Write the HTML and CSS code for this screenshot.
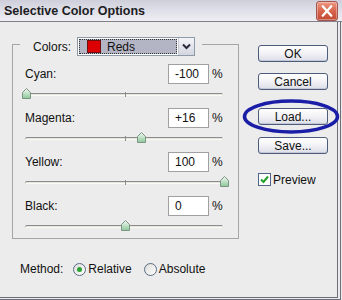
FILE: index.html
```html
<!DOCTYPE html>
<html>
<head>
<meta charset="utf-8">
<link rel="stylesheet" href="styles.css">
</head>
<body>
<div class="window">
  <div class="titlebar">
    <span class="title">Selective Color Options</span>
    <span class="close"><svg width="21" height="20" viewBox="0 0 21 20"><path d="M6 5 L15 15 M15 5 L6 15" stroke="#fff" stroke-width="2.4" stroke-linecap="round"/></svg></span>
  </div>
  <div class="frame">
    <div class="frame-inner">
      <div class="content">
        <div class="main">
          <div class="group">
            <div class="group-head">
              <div class="edge edge-left"></div>
              <div class="legend">
                <span class="legend-label">Colors:</span>
                <div class="select">
                  <div class="select-value"><span class="swatch"></span><span>Reds</span></div>
                  <div class="select-btn"><svg width="9" height="7" viewBox="0 0 9 7"><path d="M1 1.5 L4.5 5 L8 1.5" fill="none" stroke="#2a2a3a" stroke-width="2"/></svg></div>
                </div>
              </div>
              <div class="edge edge-right"></div>
            </div>
            <div class="group-body">
              <div class="channel">
                <div class="row"><span class="label">Cyan:</span><span class="num">-100</span><span class="pct">%</span></div>
                <div class="slider"><div class="track"></div><div class="tick"></div><svg class="thumb" style="left:-3px" width="9" height="11" viewBox="0 0 9 11"><defs><linearGradient id="tg1" x1="0" y1="0" x2="0" y2="1"><stop offset="0" stop-color="#f4f8f4"/><stop offset="1" stop-color="#8cc89a"/></linearGradient></defs><path d="M0.5 10.5 V4.5 L4.5 0.5 L8.5 4.5 V10.5 Z" fill="url(#tg1)" stroke="#7c9484"/></svg></div>
              </div>
              <div class="channel">
                <div class="row"><span class="label">Magenta:</span><span class="num">+16</span><span class="pct">%</span></div>
                <div class="slider"><div class="track"></div><div class="tick"></div><svg class="thumb" style="left:112px" width="9" height="11" viewBox="0 0 9 11"><path d="M0.5 10.5 V4.5 L4.5 0.5 L8.5 4.5 V10.5 Z" fill="url(#tg1)" stroke="#7c9484"/></svg></div>
              </div>
              <div class="channel">
                <div class="row"><span class="label">Yellow:</span><span class="num">100</span><span class="pct">%</span></div>
                <div class="slider"><div class="track"></div><div class="tick"></div><svg class="thumb" style="left:195px" width="9" height="11" viewBox="0 0 9 11"><path d="M0.5 10.5 V4.5 L4.5 0.5 L8.5 4.5 V10.5 Z" fill="url(#tg1)" stroke="#7c9484"/></svg></div>
              </div>
              <div class="channel">
                <div class="row"><span class="label">Black:</span><span class="num">0</span><span class="pct">%</span></div>
                <div class="slider"><div class="track"></div><div class="tick"></div><svg class="thumb" style="left:96px" width="9" height="11" viewBox="0 0 9 11"><path d="M0.5 10.5 V4.5 L4.5 0.5 L8.5 4.5 V10.5 Z" fill="url(#tg1)" stroke="#7c9484"/></svg></div>
              </div>
            </div>
          </div>
          <div class="method">
            <span class="method-label">Method:</span>
            <span class="radio checked"></span><span class="radio-text">Relative</span>
            <span class="radio second"></span><span class="radio-text">Absolute</span>
          </div>
        </div>
        <div class="side">
          <div class="btn">OK</div>
          <div class="btn btn-cancel">Cancel</div>
          <div class="btn btn-load">Load...</div>
          <div class="btn btn-save">Save...</div>
          <div class="check-row">
            <span class="checkbox"><svg width="11" height="11" viewBox="0 0 11 11"><path d="M2 5.5 L4.5 8 L9 2.5" fill="none" stroke="#22a02a" stroke-width="2"/></svg></span>
            <span>Preview</span>
          </div>
        </div>
      </div>
    </div>
  </div>
  <svg class="ellipse" width="100" height="38" viewBox="0 0 100 38"><ellipse cx="49" cy="17.5" rx="46.5" ry="15.5" fill="none" stroke="#1a1ea6" stroke-width="3.5"/></svg>
</div>
</body>
</html>
```

FILE: styles.css
```css
* { box-sizing: border-box; }
html, body { margin: 0; padding: 0; }
body {
  width: 342px;
  height: 300px;
  background: #ececec;
  font-family: "Liberation Sans", Arial, sans-serif;
  font-size: 12px;
  color: #111;
  overflow: hidden;
}
.window {
  position: relative;
  width: 342px;
  height: 300px;
  display: flex;
  flex-direction: column;
  background: #ececec;
}
.titlebar {
  height: 22px;
  flex: none;
  display: flex;
  align-items: center;
  justify-content: space-between;
  padding: 0 4px 0 4px;
  background: linear-gradient(180deg, #cfcfdb 0%, #dedee8 45%, #eeeef3 100%);
  border-bottom: 1px solid #80808e;
}
.title {
  font-weight: bold;
  font-size: 12.5px;
  color: #1c1c22;
  padding-top: 1px;
}
.close {
  width: 22px;
  height: 20px;
  margin-top: 1px;
  border-radius: 3px;
  border: 1px solid #a4544a;
  background: linear-gradient(180deg, #ec9a86 0%, #d9644c 50%, #c24a34 100%);
  display: flex;
  align-items: center;
  justify-content: center;
  box-shadow: inset 0 0 0 1px rgba(255,255,255,0.35);
}
.frame {
  flex: 1;
  width: 341px;
  padding-right: 2px;
  padding-bottom: 1px;
  border-right: 1px solid #6e6e7a;
  border-bottom: 1px solid #6e6e7a;
}
.frame-inner {
  height: 100%;
  border-right: 1px solid #6e6e7a;
  border-bottom: 1px solid #6e6e7a;
}
.content {
  display: flex;
  padding-top: 15px;
}
.main {
  padding-left: 12px;
}
.group {
  width: 227px;
}
.group-head {
  display: flex;
  height: 19px;
}
.edge {
  margin-top: 7px;
  height: 12px;
  border-top: 1px solid #a6a6a6;
}
.edge-left {
  width: 8px;
  border-left: 1px solid #a6a6a6;
}
.edge-right {
  flex: 1;
  border-right: 1px solid #a6a6a6;
}
.legend {
  display: flex;
  align-items: center;
  padding: 0 7px 0 13px;
}
.legend-label {
  margin-right: 6px;
}
.select {
  display: flex;
  height: 19px;
  width: 118px;
  border: 1px solid #8e9aa8;
  background: #fff;
}
.select-value {
  flex: 1;
  display: flex;
  align-items: center;
  margin: 1px;
  background: #b4b5c4;
  outline: 1px dotted #333;
  outline-offset: -1px;
  padding-left: 8px;
}
.swatch {
  width: 14px;
  height: 13px;
  background: #dd0000;
  border: 1px solid #6a1010;
  margin-right: 6px;
}
.select-btn {
  width: 16px;
  display: flex;
  align-items: center;
  justify-content: center;
  background: linear-gradient(180deg, #f4f4f8, #d4d6e0);
  border-left: 1px solid #c8cad6;
}
.group-body {
  border: 1px solid #a6a6a6;
  border-top: none;
  padding: 8px 12px 0 12px;
}
.row {
  display: flex;
  align-items: center;
  height: 20px;
}
.label {
  flex: 1;
}
.num {
  width: 41px;
  height: 20px;
  border: 1px solid #a0a0a0;
  background: #fff;
  display: flex;
  align-items: center;
  padding-left: 6px;
  font-size: 12px;
}
.pct {
  width: 14px;
  margin-left: 3px;
}
.slider {
  position: relative;
  height: 24px;
  width: 200px;
}
.channel:last-child .slider {
  height: 22px;
}
.track {
  position: absolute;
  left: 0;
  top: 9px;
  width: 198px;
  height: 3px;
  border-radius: 2px;
  border-top: 1px solid #8c8c8c;
  border-left: 1px solid #b0b0b0;
  border-right: 1px solid #d8d8d8;
  background: #e4e4dc;
  border-bottom: 1px solid #fbfbf4;
}
.tick {
  position: absolute;
  left: 100px;
  top: 8px;
  width: 1px;
  height: 5px;
  background: #8c8c8c;
}
.thumb {
  position: absolute;
  top: 4px;
}
.method {
  display: flex;
  align-items: center;
  height: 14px;
  margin-top: 23px;
  padding-left: 8px;
}
.method-label {
  margin-right: 10px;
}
.radio {
  width: 13px;
  height: 13px;
  border-radius: 50%;
  border: 1px solid #5b6d85;
  background: linear-gradient(135deg, #dcdcd8, #ffffff);
  display: inline-flex;
  align-items: center;
  justify-content: center;
  margin-right: 2px;
}
.radio.checked::after {
  content: "";
  width: 5px;
  height: 5px;
  border-radius: 50%;
  background: #2aa234;
}
.radio.second {
  margin-left: 12px;
}
.side {
  margin-left: 19px;
  padding-top: 8px;
  display: flex;
  flex-direction: column;
  width: 70px;
}
.btn {
  width: 70px;
  height: 17px;
  border: 1px solid #4e5c7c;
  border-radius: 3px;
  background: linear-gradient(180deg, #ffffff 0%, #f2f2f6 50%, #dcdee8 100%);
  display: flex;
  align-items: center;
  justify-content: center;
  font-size: 12px;
  box-shadow: inset 0 -1px 0 #c4c8d6;
}
.btn-cancel { margin-top: 11px; }
.btn-load { margin-top: 18px; }
.btn-save { margin-top: 12px; }
.check-row {
  display: flex;
  align-items: center;
  margin-top: 19px;
  height: 13px;
}
.checkbox {
  width: 13px;
  height: 13px;
  border: 1px solid #4e6488;
  background: #fff;
  display: flex;
  align-items: center;
  justify-content: center;
  margin-right: 2px;
}
.ellipse {
  position: absolute;
  left: 242px;
  top: 99px;
}
```
